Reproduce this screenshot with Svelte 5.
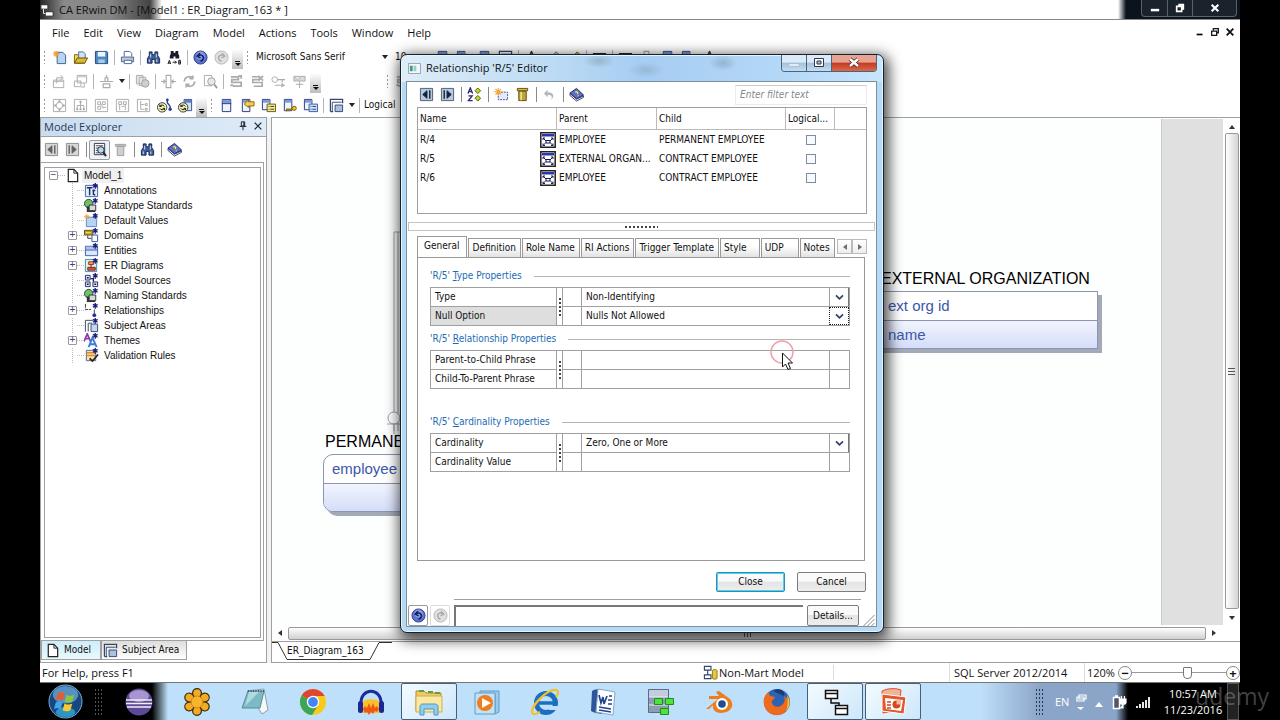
<script lang="ts">
	const menus = ['File', 'Edit', 'View', 'Diagram', 'Model', 'Actions', 'Tools', 'Window', 'Help'];

	// ':' grip, '|' separator, 'v' drop arrow, '>' overflow, anything else is an icon name
	const standardBar = [':', 'new', 'open', 'save', '|', 'print', '|', 'find', 'replace', '|', 'undo', 'redo', '>'];
	const editBar = [':', 'share', 'import', '|', 'align', 'v', '|', 'cards', '|', 'width', 'cycle', 'inspect', '|', 'flow', 'flowx', 'key', 'sign', '>'];
	const layoutBar = [':', 'ring', 'tree', 'graph', 'graph2', 'branch', 'relayout', 'reload', '>', ':', 'entity', 'tagged', 'attrs', 'keys', 'columns', '|', 'area', 'v', '|'];
	const fontBar = ['entity', 'columns', 'entity', 'area', '|', 'marker', 'brush', 'pencil', '|', 'lines', '|', 'lines', 'width', 'entity', 'columns', 'marker'];

	const disabled = new Set(['redo', 'prev', 'next', 'trash', 'back', ...editBar, 'ring', 'tree', 'graph', 'graph2', 'branch']);

	const treeNodes = [
		{ label: 'Annotations', icon: 'tAnnotation', open: false },
		{ label: 'Datatype Standards', icon: 'tStandard', open: false },
		{ label: 'Default Values', icon: 'tDefault', open: false },
		{ label: 'Domains', icon: 'tDomain', open: true },
		{ label: 'Entities', icon: 'tEntity', open: true },
		{ label: 'ER Diagrams', icon: 'tDiagram', open: true },
		{ label: 'Model Sources', icon: 'tSource', open: false },
		{ label: 'Naming Standards', icon: 'tStandard', open: false },
		{ label: 'Relationships', icon: 'tRelation', open: true },
		{ label: 'Subject Areas', icon: 'tArea', open: false },
		{ label: 'Themes', icon: 'tTheme', open: true },
		{ label: 'Validation Rules', icon: 'tRule', open: false }
	];

	const relationships = [
		{ name: 'R/4', parent: 'EMPLOYEE', child: 'PERMANENT EMPLOYEE' },
		{ name: 'R/5', parent: 'EXTERNAL ORGAN...', child: 'CONTRACT EMPLOYEE' },
		{ name: 'R/6', parent: 'EMPLOYEE', child: 'CONTRACT EMPLOYEE' }
	];

	const tabs = ['General', 'Definition', 'Role Name', 'RI Actions', 'Trigger Template', 'Style', 'UDP', 'Notes'];
	let activeTab = $state('General');

	const groups = [
		{
			key: 'T',
			rest: 'ype Properties',
			fields: [
				{ id: 'type', label: 'Type', value: 'Non-Identifying', list: true },
				{ id: 'nulls', label: 'Null Option', value: 'Nulls Not Allowed', list: true, current: true }
			]
		},
		{
			key: 'R',
			rest: 'elationship Properties',
			fields: [
				{ id: 'p2c', label: 'Parent-to-Child Phrase', value: '' },
				{ id: 'c2p', label: 'Child-To-Parent Phrase', value: '' }
			]
		},
		{
			key: 'C',
			rest: 'ardinality Properties',
			fields: [
				{ id: 'card', label: 'Cardinality', value: 'Zero, One or More', list: true },
				{ id: 'cardval', label: 'Cardinality Value', value: '' }
			]
		}
	];

	const apps = ['eclipse', 'snagit', 'notepad', 'chrome', 'audacity', 'explorer', 'player', 'ie', 'word', 'camtasia', 'blender', 'firefox', 'erwin', 'powerpoint'];
	const running = new Set(['explorer', 'erwin', 'powerpoint']);

	const star = '<path d="M12 0v6M9.5 1.5l5 3M14.5 1.5l-5 3" stroke="#1c1c7c" stroke-width="1.4"/>';
	const glasses = '<path d="M3.500 2h3v3h3v-3h3v4l2 3v5h-5v-4h-3v4h-5v-5l2-3z" fill="#3c5c9c" stroke="#16264c"/><path d="M3.500 10v3M11.500 10v3M5 4v4M11 4v4" stroke="#dfe9fa"/>';
	const book = '<path d="M1 7v2l7 6 7.500-4V9.500L8 13z" fill="#fff" stroke="#22285e" stroke-width=".9"/><path d="M1 6.500 8 1.500l7.500 7L8 12.500z" fill="#5d6fc6" stroke="#22285e"/><path d="M6.500 5.500c2-1.500 4 .5 2 2M9.500 9l.8.6" stroke="#ffe14d" stroke-width="1.400" fill="none"/>';
	const box = '<path d="M1.500 1.500h13v13h-13z"/>';

	const icons: Record<string, string> = {
		new: '<path d="M5.500 2.500h6l3 3v9h-9z" fill="#b9d4f2" stroke="#39618f"/><path d="M1 4h7M4.500 1v7M2 1.500l5 5M7 1.500l-5 5" stroke="#f19a2e" stroke-width="1.200"/>',
		open: '<path d="M1.500 14v-9h4l1 1.500h6v7.500z" fill="#f7d94f" stroke="#76680c"/><path d="M6 2h5l2 2v5H6z" fill="#cfe2f7" stroke="#4c6c95"/><path d="m1.500 14 3-5.500h11l-3 5.500z" fill="#ddb92b" stroke="#5b510e"/>',
		save: '<path d="M1.500 1.500h12l1 1v12h-13z" fill="#4c88c4" stroke="#204878"/><path d="M4 2h8v5H4z" fill="#eef5fc"/><path d="M4.500 10h7v4h-7z" fill="#a6c9e8"/>',
		print: '<path d="M4.500 7V1.500h6l2 2V7" fill="#fff" stroke="#4a6490"/><path d="M1.500 7.500h13v5h-13z" fill="#b9cbe4" stroke="#4a6490"/><path d="M4.500 11h8v3.500h-8z" fill="#fff" stroke="#4a6490"/><path d="M12 9h1" stroke="#d88b1c"/>',
		find: glasses,
		replace: '<path d="M4 1h3v2h2V1h3v3l1 2v3H9V7H7v2H3V6l1-2z" fill="#1a1a2a"/><path d="m1 15 1.500-4L4 15M1.500 14h2M6 13h4M8.500 11.500l1.500 1.500-1.500 1.500M12.500 11v4h1.800v-4zM12.500 13h2" stroke="#111" fill="none"/>',
		undo: '<circle cx="8" cy="8" r="7" fill="#5d74cf" stroke="#2c3f8c"/><circle cx="8" cy="6" r="4.500" fill="#a5b6ef" opacity=".6"/><path d="M4.500 6.500c3-2.500 7-1 6.500 2.500-.3 1.700-1.500 2.500-3 3M7.500 3.500l-3 3 3.500 2" stroke="#101c5c" stroke-width="1.600" fill="none"/>',
		redo: '<circle cx="8" cy="8" r="7" fill="#d4d4d4" stroke="#999"/><path d="M11.500 6.500c-3-2.500-7-1-6.500 2.500.3 1.700 1.500 2.500 3 3M8.500 3.500l3 3-3.500 2" stroke="#888" stroke-width="1.600" fill="none"/>',
		share: '<path d="M1.500 6.500h11v8h-11zM5 10V4h6M9 1.500 12 4 9 6.500" fill="none" stroke="#888"/><path d="M2 8h10" stroke="#999"/>',
		import: '<path d="M4.500 1.500h10v8h-10zM1.500 7.500h7v6h-7zM12 10v4h-3" fill="none" stroke="#888"/><path d="M5 3h9" stroke="#999"/>',
		align: '<path d="M1 8h14M4.500 10.500h7v4h-7zM6.500 8V4h3v4M8 1v3" fill="none" stroke="#888" stroke-width="1.300"/>',
		cards: '<path d="M1.500 1.500h7v9h-7zM4.500 3.500h7v9h-7z" fill="#ddd" stroke="#888"/><circle cx="11" cy="10" r="4" fill="#bbb" stroke="#777"/>',
		width: '<path d="M5.500 1.500h5v13h-5zM0 8h4M2.500 6l2 2-2 2M16 8h-4M13.500 6l-2 2 2 2" fill="none" stroke="#888" stroke-width="1.200"/>',
		cycle: '<path d="M2.500 8c0-5 6-6.500 9-3.500M11.500 1.500v3.500H8M13.500 8c0 5-6 6.500-9 3.500M4.500 14.500V11H8" fill="none" stroke="#888" stroke-width="1.800"/>',
		inspect: '<path d="M1.500 1.500h8v11h-8z" fill="none" stroke="#888"/><circle cx="9" cy="8" r="4" fill="#ddd" stroke="#777"/><path d="m12 11 3 4" stroke="#777" stroke-width="2"/>',
		flow: '<path d="M2 3h8v3H3v3h10v4H4M1.500 12h3M10 2h3v3" fill="none" stroke="#888" stroke-width="1.900"/>',
		flowx: '<path d="M2 3h8v3H3v3h10v4H4M9 2l5 5M14 2 9 7" fill="none" stroke="#888" stroke-width="1.700"/>',
		key: '<circle cx="4" cy="6" r="3" fill="none" stroke="#888"/><path d="M7 6h8M12 6v3M4 12h10M11 10l3 2-3 2" fill="none" stroke="#888" stroke-width="1.200"/>',
		sign: '<path d="M2 2.500h12v5H2zM8 8v7M4 11h8M3 4l3 2 3-2" fill="#ccc" stroke="#888"/>',
		ring: `<g fill="none" stroke="#888">${box}<circle cx="8" cy="8" r="3.500"/></g><path d="M7 3.500h2M7 12.500h2M3.500 7v2M12.500 7v2" stroke="#777" stroke-width="2"/>`,
		tree: `<g fill="none" stroke="#888">${box}<path d="M8 4v4M4.500 11V8h7v3M8 8v3"/></g><path d="M7 4h2M3.500 12h2M7 12h2M10.500 12h2" stroke="#777" stroke-width="2"/>`,
		graph: `<g fill="none" stroke="#888">${box}<path d="M4 4h3v3H4zM9 4h3v3H9zM4 9h3v3H4zM9 10h4M7 6l3 5"/></g>`,
		graph2: `<g fill="none" stroke="#888">${box}<path d="M4 4h3v3H4zM9 4h3v3H9zM5 7v6M11 7v6M7 9h3"/></g>`,
		branch: `<g fill="none" stroke="#888">${box}<path d="M5 3v9h4M5 7h4M10 6h2v2h-2zM10 11h2v2h-2z"/></g>`,
		relayout: '<circle cx="5.500" cy="10" r="5" fill="#f4f2b8" stroke="#333"/><path d="M3 9c1-2 4-2 5 0M8 11c-1 2-4 2-5 0M3 7v2h2M8 13v-2H6" fill="none" stroke="#111"/><path d="M11 2v3l3 4v3" fill="none" stroke="#2b3f9c" stroke-width="1.500"/><circle cx="11" cy="2" r="1.500" fill="#2b3f9c"/><circle cx="14" cy="12" r="1.800" fill="#2b3f9c"/>',
		reload: '<path d="M6.500 1.500h8v12h-8z" fill="#d3e2f6" stroke="#35508c"/><path d="M7 2h7v3H7z" fill="#5d80c4"/><circle cx="5.500" cy="10" r="5" fill="#f4f2b8" stroke="#333"/><path d="M3 9c1-2 4-2 5 0M8 11c-1 2-4 2-5 0M3 7v2h2M8 13v-2H6" fill="none" stroke="#111"/>',
		entity: '<path d="M3.500 1.500h9v13h-9z" fill="#eef3fc" stroke="#22387c"/><path d="M4 2h8v3.500H4z" fill="#7a9bd8"/><path d="M3 6h10" stroke="#22387c"/>',
		tagged: '<path d="M2.500 1.500h8v13h-8z" fill="#eef3fc" stroke="#22387c"/><path d="M3 2h7v3H3z" fill="#7a9bd8"/><path d="M15 4H9v-2L4.500 6.500 9 10V8.500h6z" fill="#f6ce4a" stroke="#8b6410"/>',
		attrs: '<path d="M1.500 1.500h8v11h-8z" fill="#eef3fc" stroke="#22387c"/><path d="M2 2h7v3H2z" fill="#7a9bd8"/><path d="M6.500 6.500h9v8h-9z" fill="#f7ec8e" stroke="#5b5b10"/><path d="M8 9h1M10 9h4M8 12h1M10 12h4" stroke="#333"/>',
		keys: '<path d="M2.500 1.500h8v12h-8z" fill="#eef3fc" stroke="#22387c"/><path d="M3 2h7v3H3z" fill="#7a9bd8"/><circle cx="13" cy="11" r="2.200" fill="#f5c531" stroke="#775508"/><path d="M11 12H5v2.500M7.500 12v2" stroke="#a3750b" stroke-width="1.500" fill="none"/>',
		columns: '<path d="M1.500 1.500h8v11h-8z" fill="#eef3fc" stroke="#22387c"/><path d="M2 2h7v3H2z" fill="#7a9bd8"/><path d="M6.500 6.500h9v8h-9z" fill="#cfe2fb" stroke="#335a9c"/><path d="M8 9h1M10 9h4M8 12h1M10 12h4" stroke="#22387c"/>',
		area: '<path d="M1.500 14.500v-13h13v4M1.500 14.500h3" fill="none" stroke="#33466c" stroke-width="1.300"/><path d="M3.500 14V4.500h10" fill="none" stroke="#33466c"/><path d="M6.500 7.500h8v7h-8z" fill="#a9c1de" stroke="#33466c"/>',
		marker: '<path d="m8 1 4 9H4zM3 14h10" fill="#3a4c88" stroke="#222"/>',
		brush: '<path d="m3 14 2-5 7-7 2 2-7 7z" fill="#ddd" stroke="#555"/>',
		pencil: '<path d="m3 14 2-5 7-7 2 2-7 7z" fill="#edb33b" stroke="#6b4f10"/>',
		lines: '<path d="M1 4h14M1 8h14M1 13h14" stroke="#222" stroke-width="1.600"/>',
		prev: '<path d="M1.500 1.500h13v13h-13z" fill="#b9c9dc" stroke="#4c5d74"/><path d="M8.500 4v8L4 8z" fill="#12233f" stroke="#12233f"/><path d="M11.500 3.500v9" stroke="#12233f" stroke-width="1.500"/>',
		next: '<path d="M1.500 1.500h13v13h-13z" fill="#b9c9dc" stroke="#4c5d74"/><path d="M7.500 4v8L12 8z" fill="#12233f" stroke="#12233f"/><path d="M4.500 3.500v9" stroke="#12233f" stroke-width="1.500"/>',
		peek: '<path d="M2.500 1.500h11v12h-11z" fill="#fff" stroke="#334"/><path d="M4 4h8M4 6.500h4M4 9h3M4 11.500h4" stroke="#445"/><circle cx="9.500" cy="8.500" r="3.500" fill="#b7dcec" stroke="#223"/><path d="m12 11 3 4" stroke="#223" stroke-width="2"/>',
		trash: '<path d="M2.500 2.500h11v2h-11zM4.500 4.500h7v10h-7z" fill="#bbb" stroke="#777"/>',
		bin: '<path d="M2.500 1.500h11v2.500h-11z" fill="#d9bd48" stroke="#5c4d10"/><path d="M4 4.500h8v10H4z" fill="#c4a436" stroke="#5c4d10"/><path d="M6.500 5v9" stroke="#f7eba4" stroke-width="1.500"/>',
		book,
		sort: '<path d="M1 7 3.500 1 6 7M2 5h3M1.500 9.500h4l-4 5h4.500" stroke="#2a2a72" stroke-width="1.400" fill="none"/><path d="m11.500 1 3 3-3 3-3-3zM11.500 9l3 3-3 3-3-3z" fill="#c5d22c" stroke="#4e5b0e"/>',
		create: '<path d="M4.500 5.500h10v8h-10z" fill="#e2ebfa" stroke="#3c4e86" stroke-dasharray="2 1"/><path d="M0 5h9M4.500 1v8M1.500 2l6 6M7.500 2l-6 6" stroke="#f2a93a" stroke-width="1.200"/>',
		back: '<path d="M6 3 2 7l4 4V8.500c4-.5 5 1 4 5 4-4 2-8-4-8z" fill="#999"/>',
		page: '<path d="M3.500 1.500h6l4 4v9h-10z" fill="#fff" stroke="#222" stroke-width="1.300"/><path d="M9.500 1.500v4h4" fill="none" stroke="#222"/>',
		tAnnotation: `<path d="M1.500 2.500h13v12h-13z" fill="#e4eefb" stroke="#3d64a4"/><path d="M3 5h6M6 5v8M10 7v5l2 1M9 8h3" stroke="#1c2c6c" stroke-width="1.500" fill="none"/>${star}`,
		tStandard: `<circle cx="5" cy="6" r="4.500" fill="#6fc06b" stroke="#1f4a22"/><path d="M3 9h9v6H3z" fill="#333"/><path d="M5.500 7.500h7v6h-7z" fill="#d8d8d8" stroke="#333"/>${star}`,
		tDefault: `<path d="M2.500 4.500h11v10h-11z" fill="#b5d4f4" stroke="#5d8bc0"/><path d="M0 4h6M3 1v6M1 2l4 4M5 2 1 6" stroke="#f0a03a"/>${star}`,
		tDomain: `<path d="M.5 2.500h9v5h-9z" fill="#b9a02b" stroke="#5c4f0b"/><path d="M2 5h5" stroke="#fbe98a"/><path d="M8.500 7.500h6v7h-6z" fill="#fff" stroke="#33509c"/><path d="M4 8v3h4" stroke="#333" fill="none"/>${star}`,
		tEntity: `<path d="M1.500 3.500h13v10h-13z" fill="#dbe7fa" stroke="#3a57a8"/><path d="M2 4h12v3H2z" fill="#a9c3ef"/><path d="M2 7.500h12" stroke="#3a57a8"/>${star}`,
		tDiagram: `<path d="M1.500 1.500h12v13h-12z" fill="#d9f0ee" stroke="#3d8d98"/><path d="M5 4h5v3H5z" fill="#f2a63a" stroke="#a03020"/><path d="M4 10h8v3H4z" fill="#e0533a" stroke="#8b2014"/><path d="M7.500 7v3" stroke="#333"/>${star}`,
		tSource: `<path d="M1.500 2.500h5v5h-5zM1.500 9.500h5v5h-5zM9.500 9.500h5v5h-5z" fill="#dfe9fa" stroke="#1c2c6c"/><path d="M3 5h2M3 12h2M11 12h2M7 6h3v3" stroke="#1c1c4c" stroke-width="1.500" fill="none"/>${star}`,
		tRelation: `<path d="M1.500 1v6h6M11 7v4" stroke="#333" fill="none" stroke-dasharray="4 1"/><circle cx="11" cy="13" r="2" fill="#22309c"/>${star}`,
		tArea: `<path d="M1.500 14.500v-12h8M4.500 14.500v-9h4" fill="none" stroke="#33466c"/><path d="M7.500 6.500h7v8h-7z" fill="#c6d8ee" stroke="#33466c"/>${star}`,
		tTheme: `<path d="M0 9 3.500 1 7 9M1.500 6h4" stroke="#8b3aa8" stroke-width="1.800" fill="none"/><path d="m5 15 4-10 4.500 10M7 12h5" stroke="#3a7ad8" stroke-width="2" fill="none"/>${star}`,
		tRule: `<path d="M2.500 2.500h10v11h-10z" fill="#f9e2a2" stroke="#4a6aa0"/><path d="M3 5h9M3 8h9" stroke="#e08a2c" stroke-width="1.500"/><path d="m6 11 3 3 6-7" stroke="#222" stroke-width="1.800" fill="none"/>${star}`,
		link: '<path d="M.8.800h14.400v14.400H.8z" fill="#fff" stroke="#222" stroke-width="1.500"/><path d="M2 2h12v2.500H2z" fill="#2a36a8"/><path d="M6 8.500h4v2.500H6zM3 6l3 3M13 6l-3 3M3 13.500l3-3M13 13.500l-3-3" stroke="#1a1a5a" fill="none"/><path d="M3 8V6h2M11 6h2v2M3 11.500v2h2M11 13.500h2v-2" stroke="#1a1a5a" fill="none"/>',
		mart: '<path d="M1.500 1.500h7v4h-7zM1.500 10.500h7v4h-7zM5 6v4" fill="#fff" stroke="#33466c" stroke-width="1.200"/><path d="M10 6c0-1.500 5-1.500 5 0v8c0 1.500-5 1.500-5 0z" fill="#e8c93c" stroke="#8c7410"/>'
	};

	// 28 x 28 launcher art
	const petals = [0, 60, 120, 180, 240, 300]
		.map((a) => `<circle cx="14" cy="5" r="4.400" transform="rotate(${a} 14 14)" fill="#f3ab25" stroke="#3a2a08" stroke-width="1.200"/>`)
		.join('');
	const appArt: Record<string, string> = {
		eclipse: '<circle cx="14" cy="14" r="13.500" fill="#5d4a94"/><ellipse cx="14" cy="8" rx="10" ry="6" fill="#a895cf"/><path d="M1 12h26M1 15.500h26M2 19h24" stroke="#f1edfa" stroke-width="1.600"/>',
		snagit: `${petals}<circle cx="14" cy="14" r="6" fill="#f5b52c" stroke="#d8861a"/>`,
		notepad: '<path d="m6 3 17-2 4 21-6 4z" fill="#f6f8f6" stroke="#8aa0a8"/><path d="M7 3h16l-4 17H1z" fill="#7dbac4" stroke="#4f8fa0"/><path d="M8 4h10L4 18" fill="#aedbe0"/><path d="M7 3h16" stroke="#556" stroke-dasharray="1 1.500" stroke-width="2"/>',
		chrome: '<circle cx="14" cy="14" r="13" fill="#fbc91b"/><path d="M14 14 2.700 7.500A13 13 0 0 1 25.300 7.500H14z" fill="#e04434"/><path d="M14 14 2.700 7.500A13 13 0 0 0 13 27l6-9.500z" fill="#3aa757"/><path d="M14 7.500h11.300" stroke="#e04434"/><circle cx="14" cy="14" r="6.200" fill="#fff"/><circle cx="14" cy="14" r="4.900" fill="#4285f4"/>',
		audacity: '<path d="M4 16C3-1 25-1 24 16" fill="none" stroke="#1b2a9c" stroke-width="3"/><path d="M5 15c1-5 17-5 18 0v10H5z" fill="#fbc02a"/><path d="m6 21 2-3 2 2 2-5 2 5 2-5 2 5 2-2 2 3-2 3-2-1-2 3-2-2-2 3-2-3-2 1z" fill="#ee5a16"/><rect x="1" y="13" width="5" height="12" rx="2.500" fill="#1a2794"/><rect x="22" y="13" width="5" height="12" rx="2.500" fill="#1a2794"/>',
		explorer: '<path d="M1 3h8l2 2h15v18H1z" fill="#eecb5c" stroke="#b08d2a"/><path d="M4 3h5M13 4h5M20 5h5" stroke="#5aa04c" stroke-width="2"/><path d="M1 8h26v16H1z" fill="#fae9a2" stroke="#cfae4d"/><path d="M5 27v-8c0-2 1-3 3-3h12c2 0 3 1 3 3v8h-4v-6H9v6z" fill="#90cdee" stroke="#4f97c5"/>',
		player: '<path d="M7 3h19v21l-4 2V6H7z" fill="#9bcbeb" stroke="#5c9cc8"/><path d="M2 5h20v21H2z" fill="#c5e2f4" stroke="#5c9cc8"/><circle cx="12" cy="15" r="8" fill="#f07d1d"/><path d="m9 10 9 5-9 5z" fill="#fff"/>',
		ie: '<circle cx="15" cy="15" r="9.500" fill="none" stroke="#1c6fc0" stroke-width="5"/><path d="M8 15h17" stroke="#1c6fc0" stroke-width="3.500"/><path d="M18 18h10v4H18z" fill="#bfe0fb"/><path d="M2 26C-3 20 16 1 25 2c4 1 1 6 0 7M2 26c2 1 5-1 7-2" fill="none" stroke="#f3c02c" stroke-width="2.200"/>',
		word: '<path d="M3 3c3-2 7-2 10-2v25C9 25 5 25 2 23z" fill="#2b579a"/><path d="m9 1 17 3-2 23-17-3z" fill="#fff" stroke="#8aa6cc"/><path d="m10 7 2 8 2-6 1 7 3-8M20 8h3M19 12h4M19 16h4M10 19l12 2M10 22l12 2" stroke="#1f4590" stroke-width="1.700" fill="none"/>',
		camtasia: '<path d="M1.500 1.500h20v23h-20z" fill="#8e9db6" stroke="#5c6a83"/><path d="M2 2h19v7H2z" fill="#c2cddd"/><path d="M2 9h19M2 17h19" stroke="#e8eef6"/><path d="M7.500 10.500h8v6h-8zM18.500 10.500h8v6h-8zM13.500 20.500h8v6h-8z" fill="#4ee23f" stroke="#218c1c"/>',
		blender: '<path d="m1 21 12-10H4V8h10L11 4l3-1 11 8c6 8-1 14-9 14-6 0-9-4-8-8l-4 4z" fill="#ee7d1c"/><circle cx="17" cy="16" r="6" fill="#fff"/><circle cx="17" cy="16" r="3.800" fill="#1d4f8c"/>',
		firefox: '<circle cx="14" cy="14" r="13" fill="#2d63b0"/><path d="M10 3c6-4 13 0 11 5" fill="#1c3c78"/><path d="M1 10C3 6 4 5 6 4c-1 4 3 4 6 5-1 3-4 3-3 6 1 4 6 5 10 2 3-2 3-6 2-9 4 2 7 8 4 12-4 9-16 9-21 3-3-4-4-9-3-13z" fill="#ee6a1d"/><path d="M24 7c4 5 3 12-1 16 2-5 2-10 1-16z" fill="#fbc52e"/>',
		erwin: '<path d="M4.500 2.500h12v8h-12zM14.500 17.500h12v9h-12z" fill="#fff" stroke="#111" stroke-width="1.500"/><path d="M4 5.500h13M14 20.500h13M10 11v4h8v3" stroke="#111" stroke-width="1.500" fill="none"/>',
		powerpoint: '<path d="M3 3c6-3 14-3 19-1l-2 20-16 3z" fill="#f3b195" stroke="#d5532b"/><path d="m3 6 24 3-2 17-22-3z" fill="#e2582c" stroke="#fff"/><path d="m6 10 18 2-2 11-15-2z" fill="#fff"/><circle cx="17.500" cy="16.500" r="4" fill="#d5471d"/><path d="M8 14h4M8 17h4M8 20h4" stroke="#d5471d" stroke-width="1.500"/><path d="M17.500 16.500v-4.500h4.500v4.500z" fill="#f6b79e"/>'
	};
</script>

{#snippet icon(name: string, off = false)}
	<svg class="icon" class:off viewBox="0 0 16 16" aria-hidden="true">{@html icons[name]}</svg>
{/snippet}

{#snippet bar(items: string[])}
	{#each items as item}
		{#if item === ':'}
			<span class="grip"></span>
		{:else if item === '|'}
			<span class="sep"></span>
		{:else if item === 'v'}
			<button class="drop" aria-label="More choices"></button>
		{:else if item === '>'}
			<button class="overflow" aria-label="Toolbar options"></button>
		{:else}
			<button class="tool" aria-label={item} disabled={disabled.has(item)}>{@render icon(item, disabled.has(item))}</button>
		{/if}
	{/each}
{/snippet}

<div class="screen">
	<header class="titlebar">
		<svg class="app-icon" viewBox="0 0 16 16" aria-hidden="true">
			<path d="M1 2h8v5H1zM6 10h9v5H6z" fill="#fff" stroke="#222" /><path d="M4 7v5h2" stroke="#fff" fill="none" />
		</svg>
		<span class="title">CA ERwin DM - [Model1 : ER_Diagram_163 * ]</span>
		<div class="window-buttons">
			<button aria-label="Minimize"><svg viewBox="0 0 12 12"><path d="M1 7h10v3H1z" fill="#fff" /></svg></button>
			<button aria-label="Restore"><svg viewBox="0 0 12 12"><path d="M4 2h6v6M2 4h6v6H2z" fill="none" stroke="#fff" stroke-width="2" /></svg></button>
			<button aria-label="Close"><svg viewBox="0 0 12 12"><path d="m2 2 8 8M10 2l-8 8" stroke="#fff" stroke-width="2.500" /></svg></button>
		</div>
	</header>

	<nav class="menubar">
		{#each menus as menu}
			<button>{menu}</button>
		{/each}
		<div class="mdi-buttons">
			<button aria-label="Minimize diagram"><svg viewBox="0 0 12 12"><path d="M2 8h7v2H2z" /></svg></button>
			<button aria-label="Restore diagram"><svg viewBox="0 0 12 12"><path d="M4 4V2h6v5H8M2 5h6v5H2z" fill="none" stroke="#111" stroke-width="1.500" /></svg></button>
			<button aria-label="Close diagram"><svg viewBox="0 0 12 12"><path d="m2 2 8 8M10 2l-8 8" stroke="#111" stroke-width="2.200" /></svg></button>
		</div>
	</nav>

	<div class="toolbar">
		{@render bar(standardBar)}
		<span class="grip"></span>
		<button class="combo font">Microsoft Sans Serif</button>
		<button class="combo size">10</button>
		{@render bar(fontBar)}
	</div>
	<div class="toolbar">
		{@render bar(editBar)}
		<div class="second-group">{@render bar([':', 'flow', 'flowx'])}</div>
	</div>
	<div class="toolbar">
		{@render bar(layoutBar)}
		<span class="mode">Logical</span>
	</div>

	<div class="workspace">
		<aside class="dock">
			<div class="dock-title">
				<span>Model Explorer</span>
				<button aria-label="Pin"><svg viewBox="0 0 12 12"><path d="M4 1h4v5H4zM2 6.500h8M6 7v4M7 1v5" fill="none" stroke="#223" stroke-width="1.200" /></svg></button>
				<button aria-label="Close explorer"><svg viewBox="0 0 12 12"><path d="m2 2 8 8M10 2l-8 8" stroke="#223" stroke-width="1.500" /></svg></button>
			</div>
			<div class="dock-tools">
				{@render bar(['prev', 'next', '|'])}
				<button class="tool pressed" aria-label="Preview">{@render icon('peek')}</button>
				{@render bar(['trash', '|', 'find', '|', 'book'])}
			</div>
			<div class="tree-frame">
				<ul class="tree">
					<li class="root">
						<span class="toggle">−</span><span class="stub"></span>
						{@render icon('page')}
						<span class="root-name">Model_1</span>
					</li>
					{#each treeNodes as node}
						<li>
							<span class="toggle" class:leaf={!node.open}>{node.open ? '+' : ''}</span><span class="stub"></span>
							{@render icon(node.icon)}
							<span>{node.label}</span>
						</li>
					{/each}
				</ul>
			</div>
			<div class="dock-tabs">
				<button class="selected">{@render icon('page')}Model</button>
				<button>{@render icon('area')}Subject Area</button>
			</div>
		</aside>

		<section class="diagram">
			<div class="view">
				<div class="canvas">
					<svg class="lines" viewBox="0 0 200 330" aria-hidden="true">
						<path d="M122 313V114h40M126 313V114" fill="none" stroke="#98a1a8" />
						<circle cx="122" cy="300" r="6" fill="#fff" stroke="#98a1a8" />
						<path d="M115 306h14M122 306v10" stroke="#98a1a8" />
					</svg>
					<div class="entity permanent">
						<h4>PERMANENT EMPLOYEE</h4>
						<div class="card round"><p>employee id</p><p></p></div>
					</div>
					<div class="entity external">
						<h4>EXTERNAL ORGANIZATION</h4>
						<div class="card"><p>ext org id</p><p>name</p></div>
					</div>
				</div>
				<div class="beyond"></div>
				<div class="scroll vertical">
					<span class="arrow up"></span>
					<span class="thumb"><i></i></span>
					<span class="arrow down"></span>
				</div>
			</div>
			<div class="scroll horizontal">
				<span class="arrow left"></span>
				<span class="thumb"><i></i></span>
				<span class="arrow right"></span>
			</div>
			<div class="sheets">
				<svg viewBox="0 0 120 20" aria-hidden="true"><path d="M0 .5h6L15 17.500h83L107 .5h13" fill="none" stroke="#333" /></svg>
				<button>ER_Diagram_163</button>
			</div>
		</section>
	</div>

	<footer class="status">
		<span class="help">For Help, press F1</span>
		<span class="mart">{@render icon('mart')}Non-Mart Model</span>
		<span class="blank"></span>
		<span class="server">SQL Server 2012/2014</span>
		<span class="percent">120%</span>
		<div class="zoom">
			<button aria-label="Zoom out">−</button>
			<input type="range" min="0" max="100" value="60" aria-label="Zoom" />
			<button aria-label="Zoom in">+</button>
		</div>
	</footer>

	<div class="taskbar">
		<button class="start" aria-label="Start">
			<svg viewBox="0 0 36 36">
				<circle cx="18" cy="18" r="17" fill="#17477e" stroke="#7fb2d8" />
				<ellipse cx="18" cy="11" rx="13" ry="9" fill="#6fa9d6" opacity=".75" />
				<ellipse cx="18" cy="29" rx="10" ry="5" fill="#35b7e6" opacity=".7" />
				<path d="M10 10c3-2 5-1 7 0l-2 7c-2-1-4-2-7 0z" fill="#ec5a2b" />
				<path d="M19 11c2 1 4 2 8 0l-2 7c-3 2-5 1-8 0z" fill="#8cc63f" />
				<path d="M8 19c3-2 5-1 7 0l-2 7c-2-1-4-2-7 0z" fill="#3fa4e8" />
				<path d="M17 20c2 1 4 2 8 0l-2 7c-3 2-5 1-8 0z" fill="#fbc92b" />
			</svg>
		</button>
		<span class="dots"></span>
		<nav class="apps">
			{#each apps as app}
				<button class:running={running.has(app)} aria-label={app}>
					<svg viewBox="0 0 28 28">{@html appArt[app]}</svg>
				</button>
			{/each}
		</nav>
		<div class="tray">
			<span class="dots dark"></span>
			<span class="lang">EN</span>
			<svg viewBox="0 0 12 20"><path d="M4 3h7v4H4zM2 5h7v4H2z" fill="none" stroke="#fff" stroke-width="1.200" /><path d="M2 15h7l-3.500 3z" fill="#fff" /></svg>
			<svg viewBox="0 0 12 20"><path d="M2 15h8L6 10z" fill="#fff" /></svg>
			<svg class="wide" viewBox="0 0 16 20"><path d="M2.500 5.500h6v11h-6zM4 4h3" fill="#556" stroke="#fff" stroke-width="1.500" /><path d="M9 7h6v3c0 3-6 3-6 0zM10.500 4v3M13.500 4v3M12 12v4H9" fill="#fff" stroke="#fff" stroke-width="1.200" /></svg>
			<svg class="wide" viewBox="0 0 16 20"><path d="M2 16v-2M5 16v-4M8 16v-6M11 16V8M14 16V5" stroke="#fff" stroke-width="1.800" /></svg>
			<div class="clock"><span>10:57 AM</span><span>11/23/2016</span></div>
			<button class="show-desktop" aria-label="Show desktop"></button>
		</div>
	</div>

	<div class="dialog" role="dialog" aria-label="Relationship 'R/5' Editor">
		<div class="dialog-title">
			<svg viewBox="0 0 14 12" aria-hidden="true"><path d="M.5.500h13v11H.5z" fill="#f4f8fa" stroke="#8aa0ac" /><path d="M2 3h3v6H2z" fill="#3f9c74" /><path d="M6 3h3v6H6z" fill="#9cc7d8" /></svg>
			<span>Relationship 'R/5' Editor</span>
			<div class="caption-buttons">
				<button aria-label="Minimize editor"><svg viewBox="0 0 12 12"><path d="M1 7h10v2H1z" fill="#fff" stroke="#9ab" stroke-width=".5" /></svg></button>
				<button aria-label="Maximize editor"><svg viewBox="0 0 12 12"><path d="M1.500 1.500h9v8h-9z" fill="#fff" stroke="#334" /><path d="M4 4h4v3H4z" fill="#9cc4e4" stroke="#334" /></svg></button>
				<button class="close" aria-label="Close editor"><svg viewBox="0 0 12 12"><path d="m2 2 8 7M10 2 2 9" stroke="#4a1a14" stroke-width="4" /><path d="m2 2 8 7M10 2 2 9" stroke="#fff" stroke-width="2.500" /></svg></button>
			</div>
		</div>
		<div class="client">
			<div class="dialog-tools">
				<button class="tool" aria-label="Previous">{@render icon('prev')}</button>
				<button class="tool" aria-label="Next">{@render icon('next')}</button>
				{@render bar(['|', 'sort', '|', 'create', 'bin', '|', 'back', '|', 'book'])}
				<input type="text" placeholder="Enter filter text" aria-label="Filter" />
			</div>

			<div class="grid-box">
				<table>
					<colgroup><col class="c-name" /><col class="c-parent" /><col class="c-child" /><col class="c-logical" /><col /></colgroup>
					<thead>
						<tr><th>Name</th><th>Parent</th><th>Child</th><th>Logical...</th><th></th></tr>
					</thead>
					<tbody>
						{#each relationships as rel}
							<tr>
								<td><div class="name-cell">{rel.name}{@render icon('link')}</div></td>
								<td>{rel.parent}</td>
								<td>{rel.child}</td>
								<td class="check"><input type="checkbox" aria-label="{rel.name} logical only" /></td>
								<td></td>
							</tr>
						{/each}
					</tbody>
				</table>
			</div>
			<div class="splitter"><i></i></div>

			<div class="tab-row">
				<div class="tabs" role="tablist">
					{#each tabs as tab}
						<button role="tab" aria-selected={tab === activeTab} class:active={tab === activeTab} onclick={() => (activeTab = tab)}>{tab}</button>
					{/each}
				</div>
				<button class="tab-scroll" aria-label="Scroll tabs left"><span class="arrow left"></span></button>
				<button class="tab-scroll" aria-label="Scroll tabs right"><span class="arrow right"></span></button>
			</div>
			<div class="panel">
				{#each groups as group}
					<fieldset>
						<div class="group-title"><span>'R/5' <u>{group.key}</u>{group.rest}</span></div>
						<div class="props">
							<div class="names">
								{#each group.fields as field}
									<label for={field.id} class:current={field.current}>{field.label}</label>
								{/each}
							</div>
							<div class="handle"><i></i></div>
							<div class="values">
								{#each group.fields as field}
									<div class="value">
										<span class="mark"></span>
										{#if field.list}
											<select id={field.id}><option>{field.value}</option></select>
											<span class="pick" class:focused={field.current}>
												<svg viewBox="0 0 10 8"><path d="m1 1.500 4 4 4-4" fill="none" stroke="#33406a" stroke-width="2" /></svg>
											</span>
										{:else}
											<input id={field.id} type="text" value={field.value} />
											<span class="pick empty"></span>
										{/if}
									</div>
								{/each}
							</div>
						</div>
					</fieldset>
				{/each}
			</div>

			<div class="actions">
				<button class="default">Close</button>
				<button>Cancel</button>
			</div>
			<div class="rule"></div>
			<div class="bottom">
				<button class="square" aria-label="Undo change">{@render icon('undo')}</button>
				<button class="square faded" aria-label="Redo change">{@render icon('redo')}</button>
				<input type="text" aria-label="Message" readonly />
				<button class="details">Details...</button>
				<svg class="resize" viewBox="0 0 12 12" aria-hidden="true"><path d="M1 12 12 1M5 12l7-7M9 12l3-3" stroke="#888" /></svg>
			</div>
		</div>
	</div>

	<svg class="pointer" viewBox="0 0 28 32" aria-hidden="true">
		<circle cx="13" cy="12" r="11" fill="none" stroke="#f0a0aa" stroke-width="1.500" />
		<path d="M13.500 13v14l3-3 2.500 5.500 2.500-1-2.500-5.500h4.500z" fill="#fff" stroke="#111" />
	</svg>
	<div class="watermark">udemy</div>
</div>

<style>
	:global(body) {
		margin: 0;
		background: #000;
	}

	.screen {
		--ui: 'Open Sans', 'Noto Sans', sans-serif;
		--dense: 'DejaVu Sans Condensed', 'DejaVu Sans', sans-serif;
		--line: #a0a0a0;
		position: relative;
		display: flex;
		flex-direction: column;
		height: 100vh;
		box-sizing: border-box;
		padding: 0 40px;
		overflow: hidden;
		font-family: var(--ui);
		font-size: 11px;
		line-height: 14px;
		color: #111;
		white-space: nowrap;
	}

	.screen :global(*) {
		box-sizing: border-box;
	}

	button,
	input,
	select {
		font: inherit;
		color: inherit;
		margin: 0;
		padding: 0;
		border: 0;
		background: none;
		border-radius: 0;
		outline: none;
	}

	.icon {
		width: 15px;
		height: 15px;
		flex: none;
	}

	.icon.off {
		filter: grayscale(1);
		opacity: 0.7;
	}

	.titlebar {
		display: flex;
		align-items: center;
		gap: 5px;
		height: 20px;
		flex: none;
		background: linear-gradient(90deg, #262626 0, #8a8a8a 24px, #858585 70px, #444 110px, #fff 122px, #fff calc(100% - 122px), #0b141d calc(100% - 114px), #0b141d);
		border-bottom: 1px solid #888;
	}

	.title {
		flex: 1;
	}

	.app-icon {
		width: 14px;
		height: 14px;
	}

	.window-buttons {
		display: flex;
		align-self: flex-start;
		margin-right: 3px;
		border: 1px solid #59616a;
		border-top: 0;
		border-radius: 0 0 4px 4px;
		background: #1a222b;
	}

	.window-buttons button {
		display: grid;
		place-items: center;
		width: 25px;
		height: 16px;
	}

	.window-buttons button + button {
		border-left: 1px solid #59616a;
	}

	.window-buttons button:last-child {
		width: 44px;
	}

	.window-buttons svg,
	.mdi-buttons svg,
	.dock-title svg {
		width: 10px;
		height: 10px;
	}

	.menubar {
		display: flex;
		align-items: center;
		gap: 14px;
		height: 25px;
		flex: none;
		padding: 0 5px 0 12px;
		background: #fff;
	}

	.mdi-buttons {
		display: flex;
		gap: 5px;
		margin-left: auto;
	}

	.toolbar {
		display: flex;
		align-items: center;
		height: 24px;
		flex: none;
		background: #fff;
		font-family: var(--dense);
		font-size: 10px;
		overflow: hidden;
	}

	.grip {
		width: 9px;
		height: 14px;
		flex: none;
		background: radial-gradient(circle, #999 1px, transparent 1px) 0 0 / 9px 4px;
	}

	.sep {
		width: 1px;
		height: 15px;
		flex: none;
		margin: 0 2px;
		background: #b4b4b4;
	}

	.tool {
		display: grid;
		place-items: center;
		width: 21px;
		height: 20px;
		flex: none;
	}

	.drop {
		width: 10px;
		height: 20px;
		flex: none;
		display: grid;
		place-items: center;
	}

	.drop::after,
	.combo.font::after {
		content: '';
		border: 3px solid transparent;
		border-top: 4px solid #222;
		border-bottom: 0;
	}

	.overflow {
		display: grid;
		align-content: end;
		justify-items: center;
		gap: 1px;
		width: 11px;
		height: 20px;
		flex: none;
		padding-bottom: 3px;
		align-self: flex-end;
		background: linear-gradient(#fff, #bdbdbd);
	}

	.overflow::before {
		content: '';
		width: 5px;
		height: 1px;
		background: #111;
	}

	.overflow::after {
		content: '';
		border: 3px solid transparent;
		border-top-color: #111;
		border-bottom: 0;
	}

	.combo.font {
		display: flex;
		align-items: center;
		justify-content: space-between;
		width: 132px;
		margin-left: 4px;
	}

	.combo.size {
		width: 44px;
		padding-left: 7px;
		text-align: left;
	}

	.mode {
		padding-left: 2px;
	}

	.second-group {
		display: flex;
		align-items: center;
		margin-left: 62px;
	}

	.workspace {
		display: flex;
		flex: 1;
		min-height: 0;
		gap: 4px;
		background: #f2f3f5;
	}

	.dock {
		display: flex;
		flex-direction: column;
		width: 227px;
		flex: none;
		background: #fff;
		border: 1px solid var(--line);
	}

	.dock-title {
		display: flex;
		align-items: center;
		gap: 5px;
		height: 19px;
		padding: 0 3px;
		background: linear-gradient(90deg, #c9dcf0, #deebf8);
		border-bottom: 1px solid var(--line);
		color: #2b3a55;
	}

	.dock-title span {
		flex: 1;
	}

	.dock-tools {
		display: flex;
		align-items: center;
		height: 25px;
	}

	.dock-tools .sep,
	.dialog-tools .sep {
		margin: 0 2px 0 3px;
		background: #888;
	}

	.pressed {
		border: 1px solid #999;
		border-radius: 2px;
		background: #eef1f6;
	}

	.tree-frame {
		flex: 1;
		min-height: 0;
		margin-right: 2px;
		padding: 4px 2px 2px 3px;
		border: 1px solid var(--line);
		border-left: 0;
	}

	.tree {
		height: 100%;
		margin: 0;
		padding: 0 0 0 4px;
		list-style: none;
		border: 1px solid var(--line);
		font-family: 'Liberation Sans', Arial, sans-serif;
		font-size: 10px;
		line-height: 15px;
	}

	.tree li {
		display: flex;
		align-items: center;
		height: 15px;
		padding-left: 19px;
	}

	.tree li.root {
		padding-left: 0;
	}

	.toggle {
		width: 9px;
		height: 9px;
		border: 1px solid #999;
		border-radius: 1px;
		line-height: 6px;
		text-align: center;
		color: #33408a;
		background: #fff;
	}

	.toggle.leaf {
		height: 15px;
		border: 0;
		background: repeating-linear-gradient(#bbb 0 1px, transparent 1px 2px) 4px 0 / 1px 100% no-repeat;
	}

	.stub {
		width: 7px;
		height: 1px;
		background: repeating-linear-gradient(90deg, #bbb 0 1px, transparent 1px 2px);
	}

	.tree .icon {
		margin-right: 5px;
	}

	.root-name {
		padding: 0 2px;
		background: #f0f0f0;
	}

	.tree .root .icon {
		margin-right: 2px;
	}

	.dock-tabs {
		display: flex;
		align-items: flex-start;
		height: 21px;
		font-family: var(--dense);
		font-size: 10px;
	}

	.dock-tabs button {
		display: flex;
		align-items: center;
		gap: 4px;
		height: 19px;
		padding: 0 7px 0 1px;
		border: 1px solid var(--line);
		border-top: 0;
		background: linear-gradient(#ddd, #fff);
	}

	.dock-tabs .selected {
		gap: 4px;
		padding: 0 9px 0 3px;
		background: linear-gradient(#cdeefa, #e8f8fd);
	}

	.diagram {
		display: flex;
		flex-direction: column;
		flex: 1;
		min-width: 0;
		background: #fff;
		border: 1px solid var(--line);
		border-right: 0;
	}

	.view {
		display: flex;
		flex: 1;
		min-height: 0;
	}

	.canvas {
		position: relative;
		flex: 1;
		background: #fdfefe;
	}

	.beyond {
		width: 62px;
		margin-top: 1px;
		background: #e0e0e0;
		border-left: 1px solid #ccc;
	}

	.lines {
		position: absolute;
		left: 0;
		top: 0;
		width: 200px;
		height: 330px;
	}

	/* diagram nodes are placed freely on the sheet */
	.entity {
		position: absolute;
		font-family: 'Liberation Sans', Arial, sans-serif;
		font-size: 15px;
	}

	.entity h4 {
		margin: 0 0 2px;
		padding-left: 2px;
		font-size: 16px;
		font-weight: 400;
		line-height: 20px;
		color: #000;
	}

	.permanent {
		left: 51px;
		top: 314px;
		width: 190px;
	}

	.external {
		left: 607px;
		top: 151px;
		width: 219px;
	}

	.card {
		border: 1px solid #8995b2;
		background: #fff;
		box-shadow: 4px 4px 0 #a3a9b6;
		color: #3a57ac;
		overflow: hidden;
	}

	.card.round {
		border-radius: 10px;
	}

	.card p {
		height: 28px;
		margin: 0;
		padding-left: 8px;
		line-height: 28px;
	}

	.card p + p {
		border-top: 1px solid #8995b2;
		background: linear-gradient(#f1f4ff, #d5ddf8);
	}

	.scroll {
		display: flex;
		align-items: center;
		justify-content: space-between;
		flex: none;
		background: #fff;
	}

	.scroll.vertical {
		flex-direction: column;
		width: 17px;
		padding: 7px 0 5px;
	}

	.scroll.horizontal {
		height: 16px;
		gap: 6px;
		padding: 0 24px 0 6px;
	}

	.thumb {
		display: grid;
		place-items: center;
		flex: 1;
		border: 1px solid #999;
		border-radius: 2px;
	}

	.vertical .thumb {
		width: 14px;
		margin: 4px 0 7px;
		background: linear-gradient(90deg, #fff, #d4d4d4);
	}

	.horizontal .thumb {
		height: 13px;
		background: linear-gradient(#fff, #d0d0d0);
	}

	.thumb i {
		width: 7px;
		height: 7px;
		background: repeating-linear-gradient(#555 0 1px, transparent 1px 3px);
	}

	.horizontal .thumb i {
		background: repeating-linear-gradient(90deg, #555 0 1px, transparent 1px 3px);
	}

	.arrow {
		width: 0;
		height: 0;
		border: 3px solid transparent;
	}

	.arrow.up {
		border-top: 0;
		border-bottom: 4px solid #333;
	}

	.arrow.down {
		border-bottom: 0;
		border-top: 4px solid #333;
	}

	.arrow.left {
		border-left: 0;
		border-right: 4px solid #333;
	}

	.arrow.right {
		border-right: 0;
		border-left: 4px solid #333;
	}

	.sheets {
		display: grid;
		height: 21px;
		flex: none;
		border-top: 1px solid var(--line);
		font-family: var(--dense);
		font-size: 10px;
	}

	.sheets svg,
	.sheets button {
		grid-area: 1 / 1;
		justify-self: start;
		align-self: start;
	}

	.sheets svg {
		width: 120px;
		height: 20px;
	}

	.sheets button {
		margin-left: 15px;
		line-height: 18px;
	}

	.status {
		display: flex;
		align-items: center;
		height: 20px;
		flex: none;
		background: #fff;
		border-bottom: 1px solid #777;
	}

	.status > span {
		line-height: 19px;
	}

	.help {
		flex: 1;
		padding-left: 2px;
	}

	.mart {
		display: flex;
		align-items: center;
		gap: 1px;
		width: 130px;
	}

	.blank {
		width: 116px;
		border-left: 1px solid #ddd;
		height: 15px;
	}

	.server {
		width: 135px;
		padding-left: 4px;
		border-left: 1px solid #ddd;
	}

	.percent {
		width: 34px;
		padding-left: 2px;
		border-left: 1px solid #ddd;
	}

	.zoom {
		display: flex;
		align-items: center;
		width: 122px;
	}

	.zoom button {
		width: 14px;
		height: 14px;
		flex: none;
		border: 1px solid #888;
		border-radius: 50%;
		line-height: 10px;
		font-weight: 700;
		font-size: 13px;
	}

	.zoom input {
		flex: 1;
		min-width: 0;
		height: 14px;
		appearance: none;
		background: linear-gradient(#999, #999) center / 100% 1px no-repeat;
	}

	.zoom input::-webkit-slider-thumb {
		appearance: none;
		width: 9px;
		height: 12px;
		border: 1px solid #777;
		border-radius: 1px 1px 4px 4px;
		background: #fff;
	}

	.taskbar {
		display: flex;
		align-items: stretch;
		height: 37px;
		flex: none;
		background: linear-gradient(90deg, #000 0, #000 112px, #bfe0fa 128px, #bfe0fa calc(100% - 260px), #8ba5c9 calc(100% - 200px), #8ba5c9 calc(100% - 124px), #000 calc(100% - 112px), #000);
	}

	.start {
		width: 50px;
		display: grid;
		place-items: center;
	}

	.start svg {
		width: 35px;
		height: 35px;
	}

	.dots {
		width: 8px;
		height: 28px;
		align-self: center;
		margin: 0 9px 0 4px;
		background: radial-gradient(circle, #555 1px, transparent 1px) 0 0 / 3px 4px;
	}

	.dots.dark {
		margin: 0 12px 0 0;
		background-image: radial-gradient(circle, #223a5c 1px, transparent 1px);
	}

	.apps {
		display: flex;
		gap: 2px;
		flex: 1;
	}

	.apps button {
		display: grid;
		place-items: center;
		width: 56px;
		flex: none;
		border: 1px solid transparent;
	}

	.apps .running {
		border-color: #44617c;
		border-radius: 2px;
		background: linear-gradient(135deg, #f4fbff, #cde7fa);
	}

	.apps svg {
		width: 28px;
		height: 28px;
	}

	.tray {
		display: flex;
		align-items: center;
		color: #fff;
	}

	.tray svg {
		width: 12px;
		height: 20px;
		margin-right: 6px;
	}

	.tray svg.wide {
		width: 16px;
		margin-right: 8px;
	}

	.lang {
		width: 20px;
	}

	.clock {
		display: flex;
		flex-direction: column;
		align-items: center;
		width: 68px;
		line-height: 16px;
	}

	.show-desktop {
		width: 12px;
		align-self: stretch;
		border: 1px solid #555;
		background: #222;
		margin-right: 1px;
	}

	/* the editor window floats above the application */
	.dialog {
		position: absolute;
		left: 400px;
		top: 54px;
		width: 484px;
		padding: 0 6px 5px 5px;
		border: 1px solid #14222e;
		border-radius: 7px;
		background:
			radial-gradient(ellipse 16px 7px at 198px 6px, #8599ad88, transparent),
			radial-gradient(ellipse 18px 8px at 245px 15px, #8ba6bf88, transparent),
			radial-gradient(ellipse 14px 8px at 322px 8px, #7d98b088, transparent),
			linear-gradient(90deg, #dfedf8, #c3dff5 25%, #a6cdf2 50%, #b4d8f7 80%, #c8e6fb) 0 0 / 100% 27px no-repeat,
			#b6d9f6;
		box-shadow: inset 0 0 0 1px #e9f5fe, 2px 4px 14px 3px rgba(0, 0, 0, 0.7);
		font-family: var(--dense);
		font-size: 10px;
	}

	.dialog-title {
		display: flex;
		align-items: center;
		gap: 5px;
		height: 26px;
		padding-left: 2px;
		font-family: var(--ui);
		font-size: 11px;
	}

	.dialog-title > svg {
		width: 13px;
		height: 11px;
	}

	.dialog-title span {
		flex: 1;
	}

	.caption-buttons {
		display: flex;
		align-self: flex-start;
		border: 1px solid #4d6378;
		border-top: 0;
		border-radius: 0 0 4px 4px;
		overflow: hidden;
	}

	.caption-buttons button {
		display: grid;
		place-items: center;
		width: 25px;
		height: 16px;
		background: linear-gradient(#dcebf7 45%, #a3c2de 50%, #c4ddf2);
		border-right: 1px solid #4d6378;
	}

	.caption-buttons .close {
		width: 44px;
		border: 0;
		background: linear-gradient(#e7a392 45%, #c33a22 50%, #d9694b);
	}

	.caption-buttons svg {
		width: 12px;
		height: 12px;
	}

	.client {
		display: flex;
		flex-direction: column;
		border: 1px solid #7d8e9c;
		background: #fff;
	}

	.dialog-tools {
		display: flex;
		align-items: center;
		height: 25px;
		padding: 0 9px;
	}

	.dialog-tools input {
		width: 132px;
		height: 20px;
		margin-left: auto;
		padding-left: 4px;
		border: 1px solid #ececec;
		border-top-color: #ccc;
		font-style: italic;
	}

	.dialog-tools input::placeholder {
		color: #888;
	}

	.grid-box {
		height: 107px;
		margin: 0 9px 0 10px;
		border: 1px solid var(--line);
	}

	table {
		width: 100%;
		table-layout: fixed;
		border-collapse: separate;
		border-spacing: 0;
	}

	.c-name {
		width: 139px;
	}

	.c-parent {
		width: 100px;
	}

	.c-child {
		width: 129px;
	}

	.c-logical {
		width: 49px;
	}

	th {
		height: 22px;
		padding: 0 2px;
		text-align: left;
		font-weight: 400;
		border-right: 1px solid #bbb;
		border-bottom: 1px solid #bbb;
	}

	th:last-child {
		border-right: 0;
	}

	td {
		height: 19px;
		padding: 0 2px;
	}

	.name-cell {
		display: flex;
		align-items: center;
		justify-content: space-between;
	}

	.name-cell .icon {
		width: 16px;
		height: 16px;
		margin-right: -1px;
	}

	.check {
		text-align: center;
	}

	.check input {
		appearance: none;
		display: block;
		width: 10px;
		height: 10px;
		margin: 0 auto;
		border: 1px solid #7c8ca4;
		background: #f8fafc;
	}

	.splitter {
		display: grid;
		place-items: center;
		height: 9px;
		margin: 8px 1px 5px;
		border: 1px solid #c4c4c4;
	}

	.splitter i {
		width: 33px;
		height: 2px;
		background: repeating-linear-gradient(90deg, #444 0 2px, transparent 2px 4px);
	}

	.tab-row {
		display: flex;
		align-items: flex-end;
		margin: 0 9px 0 10px;
	}

	.tabs {
		display: flex;
		align-items: flex-end;
		flex: 1;
		min-width: 0;
		gap: 1px;
		overflow: hidden;
	}

	.tabs button {
		height: 19px;
		padding: 0 4px 0 3px;
		flex: none;
		border: 1px solid #999;
		border-bottom: 0;
		background: linear-gradient(#fff 40%, #e2e2e2);
	}

	.tabs button:nth-child(6) {
		padding-right: 12px;
	}

	.tabs button:nth-child(7) {
		padding-right: 14px;
	}

	.tabs .active {
		height: 21px;
		padding: 0 7px 2px 6px;
		background: #fff;
	}

	.tab-scroll {
		display: grid;
		place-items: center;
		width: 15px;
		height: 15px;
		align-self: center;
		border: 1px solid #bbb;
		background: linear-gradient(#fff, #eee);
	}

	.tab-scroll .arrow {
		opacity: 0.7;
	}

	.panel {
		min-height: 304px;
		margin: 0 11px 0 10px;
		padding: 10px 14px 12px 12px;
		border: 1px solid #999;
	}

	fieldset {
		min-width: 0;
		margin: 0 0 5px;
		padding: 0;
		border: 0;
	}

	fieldset:nth-child(2) {
		margin-bottom: 25px;
	}

	.group-title {
		display: flex;
		align-items: center;
		gap: 12px;
		height: 16px;
		margin-bottom: 3px;
		color: #1c6cb4;
	}

	.group-title::after {
		content: '';
		flex: 1;
		height: 1px;
		background: #b4b4b4;
	}

	.props {
		display: flex;
		border: 1px solid var(--line);
		border-top: 0;
	}

	.names {
		display: flex;
		flex-direction: column;
		width: 125px;
	}

	.names label {
		height: 19px;
		padding-left: 4px;
		line-height: 18px;
		border-top: 1px solid var(--line);
	}

	.names .current {
		background: #dedede;
	}

	.handle {
		display: grid;
		place-items: center;
		width: 7px;
		border: 1px solid var(--line);
		border-bottom: 0;
	}

	.handle i {
		width: 2px;
		height: 18px;
		background: repeating-linear-gradient(#444 0 2px, transparent 2px 4px);
	}

	.values {
		flex: 1;
	}

	.value {
		display: grid;
		grid-template-columns: 19px 1fr 20px;
		height: 19px;
		border-top: 1px solid var(--line);
	}

	.mark {
		border-right: 1px solid var(--line);
	}

	.value select,
	.value input {
		grid-area: 1 / 2 / 2 / 4;
		appearance: none;
		min-width: 0;
		padding-left: 4px;
	}

	.pick {
		display: grid;
		place-items: center;
		grid-area: 1 / 3;
		border-left: 1px solid var(--line);
		border-right: 1px solid #777;
		background: #fff;
		pointer-events: none;
	}

	.pick.focused {
		border: 1px dotted #222;
	}

	.pick.empty {
		border-right: 0;
	}

	.pick svg {
		width: 9px;
		height: 7px;
	}

	.actions {
		display: flex;
		justify-content: flex-end;
		gap: 12px;
		padding: 11px 10px 7px;
	}

	.actions button,
	.details {
		width: 69px;
		height: 20px;
		border: 1px solid #7d7d7d;
		border-radius: 2px;
		background: linear-gradient(#fafafa 45%, #e4e4e4 50%, #eee);
	}

	.actions .default {
		border-color: #2d8fb0;
		box-shadow: inset 0 0 0 1px #52d0ee;
	}

	.rule {
		height: 1px;
		margin: 0 15px 0 47px;
		background: var(--line);
	}

	.bottom {
		display: flex;
		align-items: flex-end;
		gap: 2px;
		height: 26px;
		padding-left: 1px;
	}

	.bottom .square {
		display: grid;
		place-items: center;
		width: 20px;
		height: 21px;
		flex: none;
		border: 1px solid #999;
		border-radius: 2px;
	}

	.bottom .faded {
		border-color: #ccc;
		opacity: 0.7;
	}

	.bottom input {
		flex: 1;
		min-width: 0;
		height: 21px;
		margin-left: 2px;
		border-top: 2px solid #777;
		border-left: 2px solid #777;
	}

	.bottom .details {
		width: 52px;
		height: 21px;
		margin-left: 2px;
	}

	.resize {
		width: 15px;
		height: 12px;
	}

	.pointer {
		position: absolute;
		left: 769px;
		top: 340px;
		width: 28px;
		height: 32px;
	}

	.watermark {
		position: absolute;
		right: 11px;
		bottom: 8px;
		font-size: 23px;
		line-height: 32px;
		color: rgba(170, 170, 170, 0.4);
	}
</style>
